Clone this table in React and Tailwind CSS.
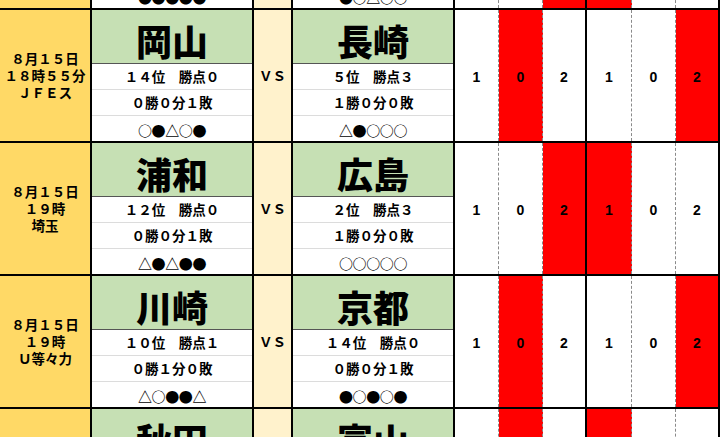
const jp = { fontFamily: '"Noto Sans CJK JP", "Noto Sans", sans-serif' };

const rows = [
  {
    date: [],
    home: { name: "", rank: "", rec: "", form: "●●●●●" },
    away: { name: "", rank: "", rec: "", form: "●○△○○" },
    scores: ["", "", "", "", "", ""],
    red: [2, 3],
  },
  {
    date: ["８月１５日", "１８時５５分", "ＪＦＥス"],
    home: { name: "岡山", rank: "１４位　勝点０", rec: "０勝０分１敗", form: "○●△○●" },
    away: { name: "長崎", rank: "５位　勝点３", rec: "１勝０分０敗", form: "△●○○○" },
    scores: ["1", "0", "2", "1", "0", "2"],
    red: [1, 5],
  },
  {
    date: ["８月１５日", "１９時", "埼玉"],
    home: { name: "浦和", rank: "１２位　勝点０", rec: "０勝０分１敗", form: "△●△●●" },
    away: { name: "広島", rank: "２位　勝点３", rec: "１勝０分０敗", form: "○○○○○" },
    scores: ["1", "0", "2", "1", "0", "2"],
    red: [2, 3],
  },
  {
    date: ["８月１５日", "１９時", "Ｕ等々力"],
    home: { name: "川崎", rank: "１０位　勝点１", rec: "０勝１分０敗", form: "△○●●△" },
    away: { name: "京都", rank: "１４位　勝点０", rec: "０勝０分１敗", form: "●○●○●" },
    scores: ["1", "0", "2", "1", "0", "2"],
    red: [1, 5],
  },
  {
    date: [],
    home: { name: "秋田", rank: "", rec: "", form: "" },
    away: { name: "富山", rank: "", rec: "", form: "" },
    scores: ["", "", "", "", "", ""],
    red: [1, 3],
  },
];

const scoreBorders = [
  "w-[44px] border-r border-dashed border-[#8a8a8a]",
  "w-[44px] border-r border-dashed border-[#8a8a8a]",
  "w-[44px] border-r-2 border-black",
  "w-[45px] border-r border-dashed border-[#8a8a8a]",
  "w-[44px] border-r border-dashed border-[#8a8a8a]",
  "w-[44px] border-r-2 border-black",
];

function Team({ t }) {
  return (
    <div className="w-[162px] h-full flex flex-col border-r-2 border-black" style={jp}>
      <div className="h-[54px] shrink-0 bg-[#c6e0b4] border-b border-[#555] flex items-center justify-center pt-[7px]">
        <span className="text-[36px] font-black leading-none text-black">{t.name}</span>
      </div>
      <div className="h-[26px] shrink-0 border-b border-[#dcdcdc] flex items-center justify-center text-[13.5px] font-bold text-black">
        {t.rank}
      </div>
      <div className="h-[26px] shrink-0 border-b border-[#dcdcdc] flex items-center justify-center text-[13.5px] font-bold text-black">
        {t.rec}
      </div>
      <div className="flex-1 flex items-center justify-center pt-[2px] text-[14px] tracking-[-0.4px] font-bold text-black leading-none">
        {t.form}
      </div>
    </div>
  );
}

function Row({ r }) {
  return (
    <div className="flex h-[133px] w-[720px] border-b-2 border-black bg-white">
      <div
        className="w-[92px] h-full bg-[#ffd966] border-r-2 border-black flex flex-col items-center justify-center text-[13.5px] font-bold leading-[17px] text-black"
        style={jp}
      >
        {r.date.map((d, i) => (
          <div key={i}>{d}</div>
        ))}
      </div>
      <Team t={r.home} />
      <div
        className="w-[39px] h-full bg-[#fff2cc] border-r-2 border-black flex items-center justify-center text-[13.5px] font-bold text-black"
        style={jp}
      >
        {r.date.length ? "ＶＳ" : ""}
      </div>
      <Team t={r.away} />
      {r.scores.map((s, i) => (
        <div
          key={i}
          className={
            scoreBorders[i] +
            " h-full flex items-center justify-center pt-[3px] text-[14px] font-bold text-black " +
            (r.red.includes(i) ? "bg-[#ff0000]" : "bg-white")
          }
          style={{ fontFamily: '"Liberation Sans", Arial, sans-serif' }}
        >
          {s}
        </div>
      ))}
    </div>
  );
}

export default function App() {
  return (
    <div className="w-[720px] h-[437px] overflow-hidden bg-white">
      <div className="-mt-[123px]">
        {rows.map((r, i) => (
          <Row key={i} r={r} />
        ))}
      </div>
    </div>
  );
}
